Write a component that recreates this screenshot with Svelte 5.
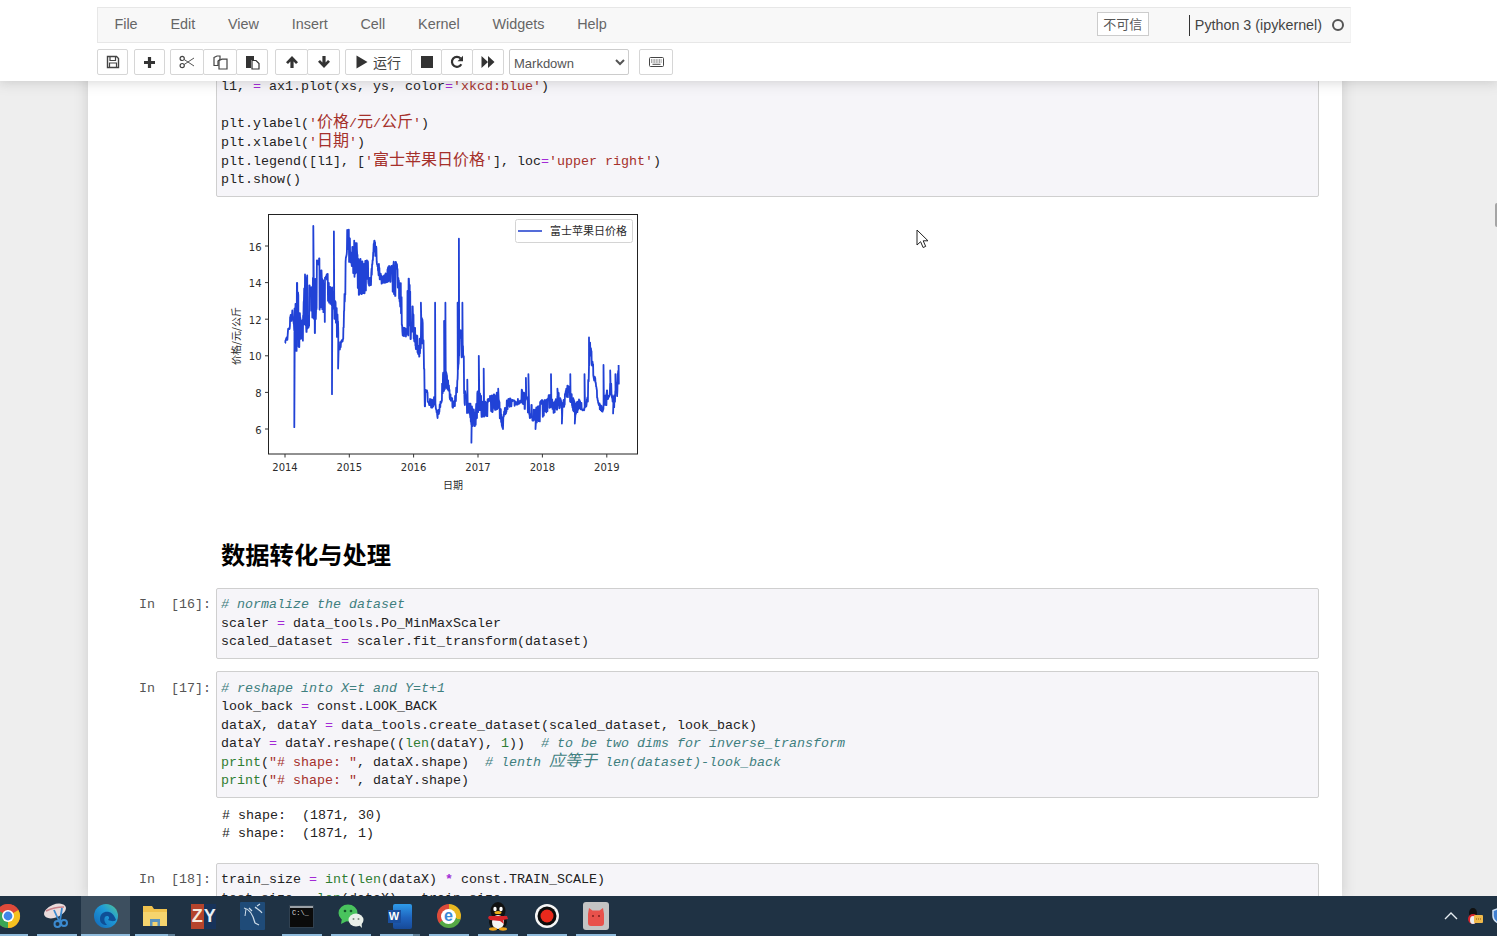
<script>
  const menus = ['File', 'Edit', 'View', 'Insert', 'Cell', 'Kernel', 'Widgets', 'Help'];

  const env = [
    [0,10.7,10.8],[.03,10.7,11.1],[.05,11.4,11.5],[.08,11.5,12.2],[.11,12.2,12.4],[.13,11.8,13.2],[.16,10,12.5],[.18,10,14.3],
    [.21,10.2,14.3],[.24,10.8,11.8],[.28,10.8,12.2],[.3,11.4,14.3],[.34,11.2,15],[.38,11.5,14],[.42,12.2,14.2],[.46,11.1,14.8],
    [.5,12.8,15.4],[.54,12.5,15.7],[.58,12.5,14.2],[.62,11.8,14.4],[.66,12.5,14.5],[.7,12.8,13.8],[.74,12.5,14],[.8,11.3,12.8],
    [.83,10,11.5],[.86,10.5,10.7],[.9,10.2,11],[.92,12,13],[.94,14,15.2],[.96,15.7,17.1],[1,15,17.1],[1.03,15,15.5],[1.06,14,16.4],
    [1.1,14.5,16.4],[1.14,13.2,15.4],[1.2,13.4,15.3],[1.25,13.3,15.2],[1.28,14.3,15.4],[1.32,13.2,14.2],[1.36,14.8,15.2],[1.38,15.8,16.4],
    [1.42,15,16],[1.46,14.2,15],[1.5,13.9,14.3],[1.56,14,14.6],[1.62,14,15],[1.68,13.3,15.1],[1.72,13.2,15.4],[1.76,13.6,14.3],
    [1.8,12,14],[1.83,11,11.6],[1.88,11,11.6],[1.91,11,14.3],[1.96,10.8,13.9],[2,10.8,12],[2.04,10.2,11.3],[2.08,9.8,10.6],[2.12,10.5,12.5],
    [2.15,10.8,11.4],[2.17,7,8.3],[2.2,7.5,8.2],[2.27,7.1,7.6],[2.33,7.3,7.8],[2.37,6.5,7],[2.42,7.3,7.6],[2.46,8,9.5],[2.52,8.2,9],
    [2.56,7.6,8],[2.62,7,7.5],[2.66,7.6,8.3],[2.72,11,11.6],[2.76,8.5,11],[2.8,6.8,8],[2.86,6.8,7.5],[2.9,6,7.3],[2.96,6.2,7],
    [3,7,8.6],[3.06,6.5,7.6],[3.12,6.6,7.5],[3.2,6.8,7.9],[3.3,7,8],[3.38,6,6.6],[3.44,7,7.6],[3.5,7.2,7.7],[3.6,7.3,7.5],[3.66,7.4,8.2],
    [3.72,7,8],[3.8,6.6,7.6],[3.88,6.3,7.2],[3.96,6.4,7.6],[4.05,6.8,7.7],[4.12,7.2,8],[4.18,6.8,7.4],[4.25,7.2,8.1],[4.3,6.6,7.3],
    [4.38,7.8,8.4],[4.44,7.4,8.2],[4.5,6.6,7.4],[4.56,7,7.7],[4.65,7,7.2],[4.7,7.4,7.9],[4.73,10.3,10.9],[4.78,9,9.6],[4.83,7.9,8.4],
    [4.88,7.1,7.4],[4.93,6.9,7.2],[5,7.5,8.2],[5.06,8,8.6],[5.1,7,7.6],[5.18,8.2,9.5]
  ];
  const spikes = [[.145,6.1],[.44,17.1],[.73,7.9],[.76,16.8],[.825,9.3],[2.11,12.9],[2.33,12.9],[2.47,11.9],[2.49,12.9],[2.51,9],[2.68,12.9],[2.70,16.4],[2.72,11.4],[2.755,12.9],[2.83,8.7],[2.894,5.25],[3.01,10],[3.085,9.3],[3.31,8.2],[3.385,6],[3.74,8.8],[3.78,9],[3.89,6],[4.13,9],[4.23,8.2],[4.3,6.3],[4.43,9],[4.5,6.3],[4.65,9],[4.72,11],[4.81,8.7],[4.945,9.5],[4.99,7.3],[5.05,9.2],[5.095,6.85],[5.13,9],[5.157,7.8],[5.18,9.5]];

  let seed = 17;
  const rand = () => (seed = (seed * 16807) % 2147483647) / 2147483647;
  const px = t => 285 + t * 64.4;
  const py = v => 246 + (16 - v) * 18.3;

  function series() {
    const pts = [];
    let i = 0, hold = 0, v = 10.7, s = 0;
    for (let t = 0; t <= 5.185; t += 0.0042) {
      while (i < env.length - 2 && env[i + 1][0] < t) i++;
      const [t0, a0, b0] = env[i], [t1, a1, b1] = env[i + 1];
      const f = Math.min(1, (t - t0) / (t1 - t0));
      const lo = a0 + (a1 - a0) * f, hi = b0 + (b1 - b0) * f;
      if (hold-- <= 0) {
        v = lo + (hi - lo) * (rand() > 0.5 ? 0.75 + rand() * 0.25 : rand() * 0.25);
        hold = Math.floor(rand() * 2);
      }
      pts.push(px(t).toFixed(1) + ',' + py(v).toFixed(1));
      while (s < spikes.length && spikes[s][0] <= t) {
        pts.push(px(spikes[s][0]).toFixed(1) + ',' + py(spikes[s][1]).toFixed(1));
        s++;
      }
    }
    return pts.join(' ');
  }
  const line = series();
  const years = [[285, '2014'], [349.3, '2015'], [413.6, '2016'], [478, '2017'], [542.4, '2018'], [606.8, '2019']];
  const vals = [[246, '16'], [282.6, '14'], [319.2, '12'], [355.8, '10'], [392.4, '8'], [429, '6']];
</script>

<div class="page">
  <header class="header">
    <nav class="menubar">
      {#each menus as m}<span class="menu">{m}</span>{/each}
      <span class="trust">不可信</span>
      <span class="kernel">Python 3 (ipykernel)</span>
      <span class="dot"></span>
    </nav>
    <div class="toolbar">
      <button class="btn w31" aria-label="save">
        <svg width="14" height="14" viewBox="0 0 14 14"><path d="M1.5 1.5h9l2 2v9h-11z" fill="none" stroke="#444" stroke-width="1.4"/><path d="M4 2v3.5h5.500V2M3.500 12.500V8h7v4.500" fill="none" stroke="#444" stroke-width="1.2"/></svg>
      </button>
      <button class="btn w31 gap1" aria-label="add">
        <svg width="13" height="13" viewBox="0 0 13 13"><path d="M6.5 1v11M1 6.5h11" stroke="#333" stroke-width="3.2"/></svg>
      </button>
      <div class="group">
        <button class="btn w34" aria-label="cut">
          <svg width="16" height="14" viewBox="0 0 16 14"><circle cx="3.2" cy="3.4" r="2.1" fill="none" stroke="#444" stroke-width="1.2"/><circle cx="3.2" cy="10.6" r="2.1" fill="none" stroke="#444" stroke-width="1.2"/><path d="M5 4.4 15 11M5 9.6 15 3" stroke="#555" stroke-width="1"/></svg>
        </button>
        <button class="btn w34" aria-label="copy">
          <svg width="15" height="15" viewBox="0 0 15 15"><path d="M1 2.5 4 1h3v3.500L5 6v4.500H1z" fill="none" stroke="#444" stroke-width="1.2"/><path d="M6 5.500 9 4.200h5V14H6z" fill="none" stroke="#444" stroke-width="1.2"/></svg>
        </button>
        <button class="btn w32" aria-label="paste">
          <svg width="15" height="15" viewBox="0 0 15 15"><path d="M1 1h8v4H6v8H1z" fill="#333"/><path d="M7 5.500h4l3 3V14H7z" fill="#fff" stroke="#333" stroke-width="1.2"/></svg>
        </button>
      </div>
      <div class="group gap2">
        <button class="btn w33" aria-label="up">
          <svg width="14" height="14" viewBox="0 0 14 14"><path d="M7 1 13 7.200 11 9 8.600 6.500V13H5.400V6.500L3 9 1 7.200z" fill="#333"/></svg>
        </button>
        <button class="btn w33" aria-label="down">
          <svg width="14" height="14" viewBox="0 0 14 14"><path d="M7 13 1 6.800 3 5 5.400 7.500V1h3.200v6.500L11 5l2 1.800z" fill="#333"/></svg>
        </button>
      </div>
      <div class="group">
        <button class="btn w67 run">
          <svg width="12" height="14" viewBox="0 0 12 14"><path d="M0.500 0.500 11.500 7 .5 13.500z" fill="#333"/></svg>
          <span>运行</span>
        </button>
        <button class="btn w31" aria-label="stop">
          <svg width="12" height="12" viewBox="0 0 12 12"><rect width="12" height="12" fill="#333"/></svg>
        </button>
        <button class="btn w32" aria-label="restart">
          <svg width="14" height="14" viewBox="0 0 14 14"><path d="M11.300 9.300A5 5 0 1 1 10.600 3.400" fill="none" stroke="#333" stroke-width="2.200"/><path d="M13 .8V6.300H7.500z" fill="#333"/></svg>
        </button>
        <button class="btn w32" aria-label="run all">
          <svg width="14" height="12" viewBox="0 0 14 12"><path d="M0.500 0 7 6 .5 12zM7 0l6.500 6L7 12z" fill="#333"/></svg>
        </button>
      </div>
      <select class="select" aria-label="cell type">
        <option>Markdown</option>
        <option>Code</option>
      </select>
      <button class="btn w34 gap3" aria-label="keyboard">
        <svg width="15" height="10" viewBox="0 0 15 10"><rect x=".5" y=".5" width="14" height="9" rx="1" fill="none" stroke="#444"/><path d="M2 3h11M2 5h11" stroke="#555" stroke-width="1.100" stroke-dasharray="1 .6"/><path d="M3.500 7.300h8" stroke="#555" stroke-width="1.100"/></svg>
      </button>
    </div>
  </header>

  <main class="viewport">
    <div class="notebook">
      <section class="cell first">
        <div class="prompt"></div>
        <pre class="input"><span>l1, </span><span class="o">=</span> ax1.plot(xs, ys, color<span class="o">=</span><span class="s">'xkcd:blue'</span>)

plt.ylabel(<span class="s">'<span class="z">价格</span>/<span class="z">元</span>/<span class="z">公斤</span>'</span>)
plt.xlabel(<span class="s">'<span class="z">日期</span>'</span>)
plt.legend([l1], [<span class="s">'<span class="z">富士苹果日价格</span>'</span>], loc<span class="o">=</span><span class="s">'upper right'</span>)
plt.show()</pre>
      </section>

      <svg class="chart" width="430" height="290" viewBox="220 205 430 290">
        <rect x="268.500" y="214.500" width="369" height="239.500" fill="#fff" stroke="#222" stroke-width="1"/>
        <polyline points={line} fill="none" stroke="#2142d6" stroke-width="1.800" stroke-linejoin="round"/>
        {#each years as [x, label]}
          <line x1={x} x2={x} y1="454" y2="457.500" stroke="#333"/>
          <text x={x} y="471" text-anchor="middle" class="tick">{label}</text>
        {/each}
        {#each vals as [y, label]}
          <line x1="265" x2="268.500" y1={y} y2={y} stroke="#333"/>
          <text x="261.500" y={y + 4.5} text-anchor="end" class="tick">{label}</text>
        {/each}
        <text x="453" y="489" text-anchor="middle" class="cap">日期</text>
        <text transform="translate(240 336) rotate(-90)" text-anchor="middle" class="cap">价格/元/公斤</text>
        <rect x="515.500" y="219.500" width="117" height="23" rx="2" fill="#fff" stroke="#d4d4d4"/>
        <line x1="518" x2="542" y1="231" y2="231" stroke="#2a48d0" stroke-width="1.600"/>
        <text x="550" y="235" class="leg">富士苹果日价格</text>
      </svg>

      <h2 class="title">数据转化与处理</h2>

      <section class="cell">
        <div class="prompt">In  [16]:</div>
        <pre class="input"><span class="c"># normalize the dataset</span>
scaler <span class="o">=</span> data_tools.Po_MinMaxScaler
scaled_dataset <span class="o">=</span> scaler.fit_transform(dataset)</pre>
      </section>

      <section class="cell next">
        <div class="prompt">In  [17]:</div>
        <pre class="input"><span class="c"># reshape into X=t and Y=t+1</span>
look_back <span class="o">=</span> const.LOOK_BACK
dataX, dataY <span class="o">=</span> data_tools.create_dataset(scaled_dataset, look_back)
dataY <span class="o">=</span> dataY.reshape((<span class="b">len</span>(dataY), <span class="b">1</span>))  <span class="c"># to be two dims for inverse_transform</span>
<span class="b">print</span>(<span class="s">"# shape: "</span>, dataX.shape)  <span class="c"># lenth <span class="z">应等于</span> len(dataset)-look_back</span>
<span class="b">print</span>(<span class="s">"# shape: "</span>, dataY.shape)</pre>
      </section>

      <pre class="output"># shape:  (1871, 30)
# shape:  (1871, 1)</pre>

      <section class="cell last">
        <div class="prompt">In  [18]:</div>
        <pre class="input">train_size <span class="o">=</span> <span class="b">int</span>(<span class="b">len</span>(dataX) <span class="o bold">*</span> const.TRAIN_SCALE)
test_size <span class="o">=</span> <span class="b">len</span>(dataX) <span class="o">-</span> train_size
trainX <span class="o">=</span> dataX[:train_size]</pre>
      </section>
    </div>

    <svg class="cursor" width="14" height="20" viewBox="0 0 14 20"><path d="M1 1v15l3.600-3.300 2.500 5.800 2.600-1.100-2.500-5.600h4.800z" fill="#fff" stroke="#222" stroke-width="1"/></svg>
    <div class="edge"></div>
  </main>

  <footer class="taskbar">
    <div class="slot lead u">
      <svg width="26" height="26" viewBox="0 0 26 26"><circle cx="13" cy="13" r="12" fill="#de4a3a"/><path d="M13 13 23.400 7A12 12 0 0 1 13 25z" fill="#f4c020"/><path d="M13 13 13 25A12 12 0 0 1 2.600 7z" fill="#3aa655"/><path d="M2.600 7A12 12 0 0 1 23.400 7L13 7z" fill="#de4a3a"/><circle cx="13" cy="13" r="6" fill="#fff"/><circle cx="13" cy="13" r="4.400" fill="#3f86e8"/></svg>
    </div>
    <div class="slot u">
      <svg width="28" height="28" viewBox="0 0 28 28"><ellipse cx="12" cy="9" rx="11.500" ry="6.500" transform="rotate(-22 12 9)" fill="#e9dcdc"/><path d="M3 9Q11 5 21 5" stroke="#c9828a" stroke-width="1.500" fill="none"/><path d="M11 8l5 11M19 6l-2 13" stroke="#3b8ad0" stroke-width="1.800"/><circle cx="14.500" cy="22" r="3" fill="none" stroke="#3b8ad0" stroke-width="2"/><circle cx="21" cy="21" r="3" fill="none" stroke="#3b8ad0" stroke-width="2"/></svg>
    </div>
    <div class="slot u active">
      <svg width="26" height="26" viewBox="0 0 26 26"><defs><linearGradient id="eg" x1="0" y1="1" x2="1" y2="0"><stop offset="0" stop-color="#1266b8"/><stop offset=".6" stop-color="#1f9bd8"/><stop offset="1" stop-color="#55c890"/></linearGradient></defs><circle cx="13" cy="13" r="12" fill="url(#eg)"/><path d="M7 16c0-6 5-8 9-7s6 5 7 8c-2 2-5 1-8 0 2-2 1-4-1-4-3 0-4 5 0 9-4 0-7-2-7-6z" fill="#0f4f96"/></svg>
    </div>
    <div class="slot u u-split">
      <svg width="26" height="24" viewBox="0 0 26 24"><path d="M1 2h9l2 3h13v17H1z" fill="#f0c24e"/><path d="M1 8h24v14H1z" fill="#f5d46e"/><path d="M8 15h10v7H8z" fill="#5b93bc"/><path d="M10.500 18h5v4h-5z" fill="#f5d46e"/></svg>
    </div>
    <div class="slot">
      <div class="zy"><span class="zl">Z</span><span class="zr">Y</span></div>
    </div>
    <div class="slot">
      <svg width="25" height="28" viewBox="0 0 25 28"><rect width="25" height="28" rx="1" fill="#1f4b78"/><path d="M4 6c6 1 9 7 11 15M9 6l3 3M15 5c2 2 5 3 7 6M17 4l3-2M15 21l4 2" stroke="#cfdde9" stroke-width="1.200" fill="none"/><path d="M6 7 5 14" stroke="#cfdde9" stroke-width="1"/></svg>
    </div>
    <div class="slot u">
      <div class="cmd"><span class="cmdtext">C:\_</span></div>
    </div>
    <div class="slot u">
      <svg width="26" height="26" viewBox="0 0 26 26"><ellipse cx="10" cy="10" rx="9.500" ry="8.500" fill="#49c35d"/><path d="M4 15 3 21l6-3z" fill="#49c35d"/><circle cx="7" cy="8" r="1.300" fill="#14572a"/><circle cx="13" cy="8" r="1.300" fill="#14572a"/><ellipse cx="18" cy="17" rx="7.500" ry="6.500" fill="#e9efe9"/><path d="M21 22l3 3-.5-5z" fill="#e9efe9"/><circle cx="15.500" cy="16" r="1" fill="#7a8a7c"/><circle cx="20.500" cy="16" r="1" fill="#7a8a7c"/></svg>
    </div>
    <div class="slot u u-word">
      <div class="word"><span class="wstrip"></span><span class="wbox">W</span></div>
    </div>
    <div class="slot u">
      <div class="ering"><span class="einner">e</span></div>
    </div>
    <div class="slot u">
      <svg width="24" height="30" viewBox="0 0 24 30"><ellipse cx="12" cy="10" rx="7.500" ry="9" fill="#111"/><ellipse cx="12" cy="21" rx="9" ry="8" fill="#111"/><ellipse cx="12" cy="21" rx="6" ry="7" fill="#f5f5f5"/><ellipse cx="9" cy="8" rx="1.700" ry="2.200" fill="#fff"/><ellipse cx="15" cy="8" rx="1.700" ry="2.200" fill="#fff"/><ellipse cx="12" cy="11.500" rx="3.500" ry="1.600" fill="#f0b21c"/><path d="M3 15h18l1 3-5 1 1 4-4-3-10-1-2-2z" fill="#d8242a"/><ellipse cx="7" cy="28" rx="4" ry="1.700" fill="#f0a51c"/><ellipse cx="17" cy="28" rx="4" ry="1.700" fill="#f0a51c"/></svg>
    </div>
    <div class="slot u">
      <svg width="26" height="26" viewBox="0 0 26 26"><circle cx="13" cy="13" r="12" fill="#f6f6f6"/><circle cx="13" cy="13" r="9.500" fill="#0c0c0c"/><circle cx="13" cy="13" r="6.500" fill="#e8291c"/></svg>
    </div>
    <div class="slot u">
      <svg width="26" height="28" viewBox="0 0 26 28"><rect width="26" height="28" rx="3" fill="#c4c4c4"/><path d="M6 6l3.500 2.500h7L20 6l1 6v9q0 3-3 3H8q-3 0-3-3v-9z" fill="#e8514b"/><circle cx="10" cy="14" r="1" fill="#7d1f1c"/><circle cx="16" cy="14" r="1" fill="#7d1f1c"/></svg>
    </div>

    <div class="tray">
      <svg width="14" height="8" viewBox="0 0 14 8"><path d="M1 7 7 1l6 6" fill="none" stroke="#e6edf2" stroke-width="1.400"/></svg>
      <svg width="18" height="20" viewBox="0 0 18 20"><ellipse cx="7" cy="7" rx="4" ry="5" fill="#111"/><ellipse cx="7" cy="13" rx="5" ry="5" fill="#d8242a"/><ellipse cx="7" cy="14" rx="3" ry="4" fill="#eee"/><rect x="8" y="9" width="9" height="8" rx="1" fill="#f0b94a"/><path d="M10 13h5" stroke="#8a5a10" stroke-dasharray="1 1"/></svg>
      <svg width="16" height="18" viewBox="0 0 16 18"><path d="M8 1 15 3.500V9q0 5-7 8Q1 14 1 9V3.500z" fill="#3f7fd0" stroke="#cfe2f6" stroke-width="1.500"/></svg>
    </div>
  </footer>
</div>

<style>
  :global(body) {
    margin: 0;
    background: #eee;
  }
  .page {
    position: relative;
    display: flex;
    flex-direction: column;
    width: 1497px;
    height: 936px;
    overflow: hidden;
    background: #eee;
  }
  .header {
    position: absolute;
    top: 0;
    left: 0;
    right: 0;
    z-index: 5;
    height: 81px;
    box-sizing: border-box;
    padding: 7px 0 0 97px;
    background: #fff;
    box-shadow: 0 0 12px 1px rgba(87, 87, 87, 0.25);
    font-family: "Liberation Sans", Arial, sans-serif;
  }
  .menubar {
    display: flex;
    align-items: center;
    width: 1254px;
    height: 36px;
    box-sizing: border-box;
    background: #f8f8f8;
    border: 1px solid #e7e7e7;
    border-right-color: #f2f2f2;
    font-size: 14.400px;
    color: #666;
  }
  .menu {
    padding: 0 16.400px;
    margin-top: -2px;
  }
  .trust {
    box-sizing: border-box;
    width: 52px;
    height: 24px;
    margin-left: auto;
    margin-right: 40px;
    margin-top: -2px;
    background: #fff;
    border: 1px solid #ccc;
    font: 13px/21px "Noto Sans CJK SC", sans-serif;
    color: #555;
    text-align: center;
  }
  .kernel {
    border-left: 1px solid #333;
    padding-left: 5px;
    height: 21px;
    line-height: 21px;
    font-size: 14.300px;
    color: #444;
    white-space: nowrap;
  }
  .dot {
    box-sizing: border-box;
    width: 12px;
    height: 12px;
    margin: 0 6px 0 10px;
    border: 2px solid #555;
    border-radius: 50%;
  }
  .toolbar {
    display: flex;
    margin-top: 6px;
    gap: 5px;
  }
  .group {
    display: flex;
  }
  .group .btn + .btn {
    margin-left: -1px;
  }
  .btn {
    display: flex;
    align-items: center;
    justify-content: center;
    gap: 5px;
    box-sizing: border-box;
    height: 26px;
    padding: 0;
    background: #fff;
    border: 1px solid #d6d6d6;
    border-radius: 2px;
  }
  .w31 { width: 31px; }
  .w32 { width: 32px; }
  .w33 { width: 33px; }
  .w34 { width: 34px; }
  .w67 { width: 67px; }
  .gap1 { margin-left: 1px; }
  .gap2 { margin-left: 2px; }
  .gap3 { margin-left: 5px; }
  .run {
    font: 14px "Noto Sans CJK SC", sans-serif;
    color: #444;
  }
  .select {
    box-sizing: border-box;
    width: 120px;
    height: 26px;
    padding: 2px 0 0 0;
    background: #fff;
    border: 1px solid #ccc;
    border-radius: 2px;
    font: 13px "Liberation Sans", Arial, sans-serif;
    color: #555;
  }
  .viewport {
    position: relative;
    flex: 1;
    min-height: 0;
    overflow: hidden;
  }
  .notebook {
    box-sizing: border-box;
    width: 1254px;
    height: 100%;
    margin-left: 88px;
    padding: 70px 23px 0 0;
    background: #fff;
    box-shadow: 0 0 12px 1px rgba(87, 87, 87, 0.2);
  }
  .cell {
    display: flex;
    font: 13.333px/18.600px "Liberation Mono", "Noto Sans CJK SC", monospace;
  }
  .next { margin-top: 12.500px; }
  .last { margin-top: 19px; }
  .prompt {
    box-sizing: border-box;
    flex: 0 0 128px;
    padding: 8.300px 5px 0 0;
    text-align: right;
    white-space: pre;
    color: #555;
  }
  pre {
    margin: 0;
    font: inherit;
    color: #222;
  }
  .input {
    flex: 1;
    min-width: 0;
    padding: 7.300px 4px 5.700px 4px;
    background: #f6f5f9;
    border: 1px solid #cfcfcf;
    border-radius: 2px;
    overflow: hidden;
  }
  .output {
    margin: 9px 0 0 134px;
    font: 13.333px/18.600px "Liberation Mono", monospace;
    color: #222;
  }
  .o { color: #a32bd6; }
  .bold { font-weight: 700; }
  .s { color: #a5302b; }
  .b { color: #2f7d32; }
  .c { color: #3f7f7f; font-style: italic; }
  .z {
    font-family: "Noto Sans CJK SC", sans-serif;
    font-size: 16px;
    line-height: 0;
  }
  .chart {
    display: block;
    margin: 8.400px 0 0 132px;
  }
  .tick {
    font: 10px "DejaVu Sans", sans-serif;
    fill: #2b2b2b;
  }
  .cap {
    font: 10px "Noto Sans CJK SC", sans-serif;
    fill: #2b2b2b;
  }
  .leg {
    font: 11px "Noto Sans CJK SC", sans-serif;
    fill: #2b2b2b;
  }
  .title {
    margin: 42px 0 17px 133px;
    font: 700 24.300px/34px "Noto Sans CJK SC", sans-serif;
    color: #000;
  }
  .cursor {
    position: absolute;
    left: 916px;
    top: 229px;
  }
  .edge {
    position: absolute;
    right: -2px;
    top: 203px;
    width: 4px;
    height: 24px;
    border-radius: 3px;
    background: #a5a5a5;
  }
  .taskbar {
    position: relative;
    z-index: 6;
    display: flex;
    flex: 0 0 40px;
    height: 40px;
    background: #1f3244;
    overflow: hidden;
  }
  .slot {
    position: relative;
    display: flex;
    align-items: center;
    justify-content: center;
    flex: 0 0 49px;
    height: 40px;
  }
  .lead { margin-left: -17px; }
  .u::after {
    content: "";
    position: absolute;
    left: 4.500px;
    right: 4.500px;
    bottom: 0;
    height: 2px;
    background: #8fbbdc;
  }
  .active {
    background: #3d4f5f;
  }
  .active::after {
    left: 0;
    right: 0;
  }
  .u-split::before,
  .u-word::before {
    content: "";
    position: absolute;
    right: 4.500px;
    bottom: 0;
    width: 7px;
    height: 2px;
    background: #5f7f98;
    z-index: 1;
  }
  .zy {
    display: flex;
    width: 25px;
    height: 25px;
    font: 700 18px/25px "Liberation Sans", Arial, sans-serif;
    text-align: center;
  }
  .zl {
    flex: 1;
    background: #b5442c;
    color: #f7e9dd;
  }
  .zr {
    flex: 1;
    background: #17335a;
    color: #eaf0f6;
  }
  .cmd {
    box-sizing: border-box;
    width: 23px;
    height: 21px;
    background: #0b0b0b;
    border-top: 2px solid #9aa0a6;
    outline: 1px solid #30404f;
  }
  .cmdtext {
    display: block;
    font: 7px/11px "Liberation Mono", monospace;
    color: #ddd;
    padding-left: 2px;
  }
  .word {
    position: relative;
    width: 24px;
    height: 25px;
  }
  .wstrip {
    position: absolute;
    right: 0;
    top: 0;
    width: 19px;
    height: 25px;
    border-radius: 2px;
    background: linear-gradient(#2e9bea, #1f63bd 55%, #174a98);
  }
  .wbox {
    position: absolute;
    left: 0;
    top: 6px;
    width: 13px;
    height: 13px;
    background: #1a4f9e;
    color: #fff;
    font: 700 11px/13px "Liberation Sans", Arial, sans-serif;
    text-align: center;
  }
  .ering {
    display: flex;
    align-items: center;
    justify-content: center;
    width: 24px;
    height: 24px;
    border-radius: 50%;
    background: conic-gradient(#e8b820 0 30%, #55a845 30% 65%, #dd4b3a 65% 100%);
  }
  .einner {
    display: block;
    width: 15px;
    height: 15px;
    border-radius: 50%;
    background: #fff;
    color: #3a8ad8;
    font: 700 16px/13px "Liberation Sans", Arial, sans-serif;
    text-align: center;
  }
  .tray {
    display: flex;
    align-items: center;
    gap: 8px;
    margin-left: auto;
    margin-right: -11px;
  }
</style>
